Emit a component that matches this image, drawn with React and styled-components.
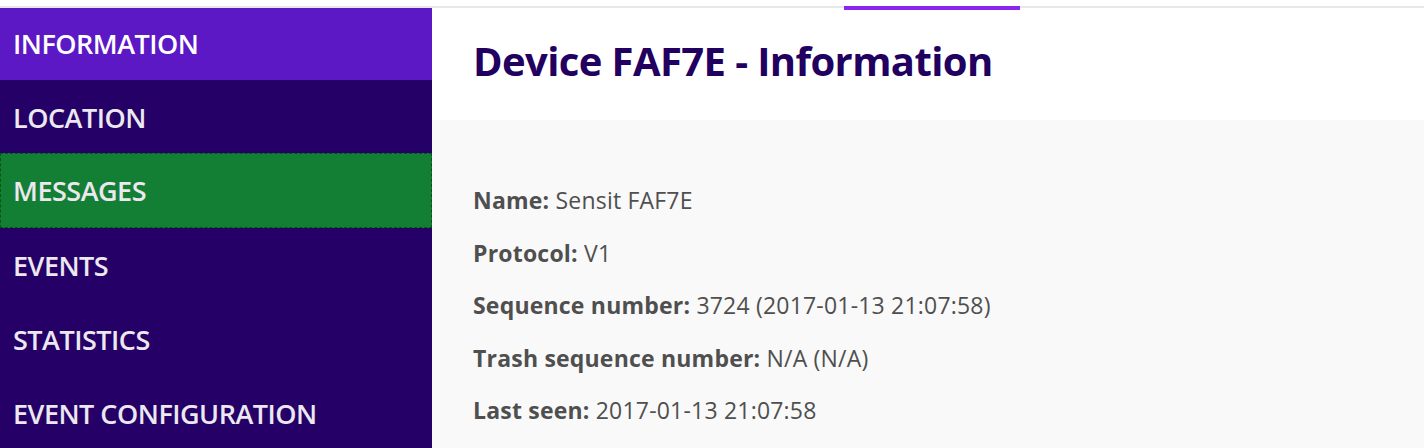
import React from 'react';
import styled, { createGlobalStyle } from 'styled-components';

const GlobalStyle = createGlobalStyle`
  html, body {
    margin: 0;
    padding: 0;
    background: #f9f9f9;
  }
  body {
    font-family: 'Open Sans', 'Liberation Sans', sans-serif;
  }
`;

const Page = styled.div`
  position: relative;
  padding-top: 6px;
  background: #ffffff;
  min-height: 448px;
  box-sizing: border-box;
`;

const TopLine = styled.div`
  position: absolute;
  top: 6px;
  left: 0;
  right: 0;
  height: 2px;
  background: #e8e8e8;
  z-index: 2;
`;

const TabIndicator = styled.div`
  position: absolute;
  top: 6px;
  left: 844px;
  width: 176px;
  height: 4px;
  background: #8a25f2;
  z-index: 3;
`;

const Layout = styled.div`
  display: flex;
  min-height: 442px;
`;

const Sidebar = styled.nav`
  width: 432px;
  flex-shrink: 0;
  background: #250066;
  display: flex;
  flex-direction: column;
`;

const NavItem = styled.div`
  box-sizing: border-box;
  display: flex;
  align-items: center;
  font-size: 27px;
  font-weight: 600;
  letter-spacing: -0.5px;
  color: ${({ $active }) => ($active ? '#ffffff' : '#ebe8ef')};
  background: ${({ $active, $focused }) =>
    $active ? '#5b18c4' : $focused ? '#137f35' : 'transparent'};
  border: ${({ $focused }) => ($focused ? '1px dashed #055510' : 'none')};
  padding-left: ${({ $focused }) => ($focused ? '12px' : '13px')};
  margin-top: ${({ $focused }) => ($focused ? '-1px' : '0')};
  height: ${({ $focused }) => ($focused ? '75px' : '74px')};
`;

const Main = styled.main`
  flex: 1;
  display: flex;
  flex-direction: column;
  background: #f9f9f9;
`;

const Header = styled.header`
  background: #ffffff;
  height: 114px;
  display: flex;
  align-items: center;
  padding-left: 41px;
  box-sizing: border-box;
`;

const Title = styled.h1`
  margin: 0 0 6px;
  font-size: 40px;
  font-weight: 700;
  color: #22005f;
  letter-spacing: -0.6px;
`;

const Details = styled.div`
  padding: 54px 0 0 41px;
  display: flex;
  flex-direction: column;
`;

const Row = styled.p`
  margin: 0;
  height: 52.5px;
  line-height: 52.5px;
  font-size: 23px;
  color: #4f4f4f;
  letter-spacing: 0.2px;
`;

const Label = styled.strong`
  font-weight: 700;
`;

const navItems = ['INFORMATION', 'LOCATION', 'MESSAGES', 'EVENTS', 'STATISTICS', 'EVENT CONFIGURATION'];

const details = [
  ['Name:', 'Sensit FAF7E'],
  ['Protocol:', 'V1'],
  ['Sequence number:', '3724 (2017-01-13 21:07:58)'],
  ['Trash sequence number:', 'N/A (N/A)'],
  ['Last seen:', '2017-01-13 21:07:58'],
];

export default function App() {
  return (
    <Page>
      <GlobalStyle />
      <TopLine />
      <TabIndicator />
      <Layout>
        <Sidebar>
          {navItems.map((item) => (
            <NavItem key={item} $active={item === 'INFORMATION'} $focused={item === 'MESSAGES'}>
              {item}
            </NavItem>
          ))}
        </Sidebar>
        <Main>
          <Header>
            <Title>Device FAF7E - Information</Title>
          </Header>
          <Details>
            {details.map(([label, value]) => (
              <Row key={label}>
                <Label>{label}</Label> {value}
              </Row>
            ))}
          </Details>
        </Main>
      </Layout>
    </Page>
  );
}
